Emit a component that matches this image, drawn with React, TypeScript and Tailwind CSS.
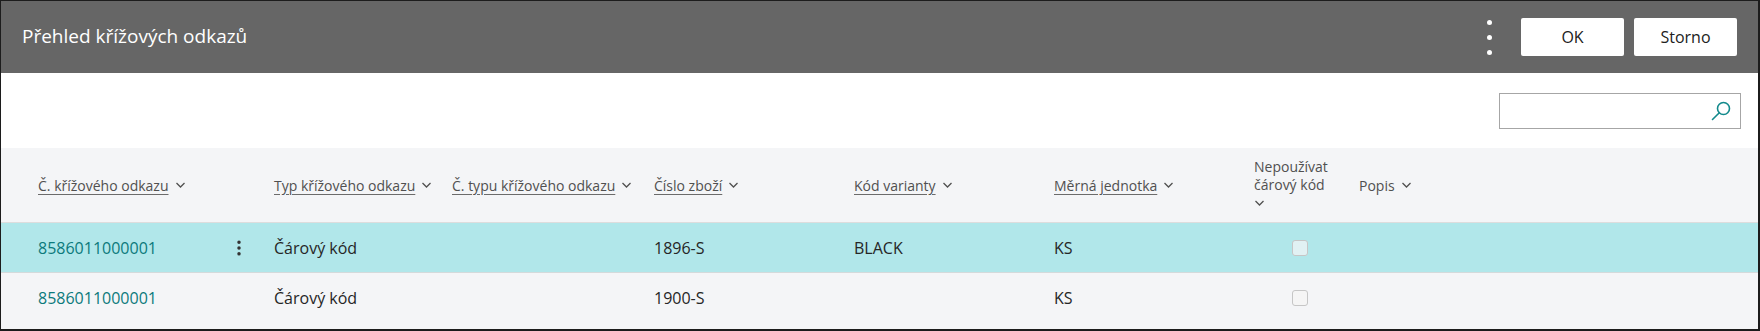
import { MoreVertical } from "lucide-react";

const font = { fontFamily: '"Segoe UI", "Open Sans", sans-serif' };

function Chevron() {
  return (
    <svg width="11" height="8" viewBox="0 0 11 8" className="inline-block ml-[6px] shrink-0">
      <polyline points="1.5,2 5.5,6 9.5,2" fill="none" stroke="#505050" strokeWidth="1.3" />
    </svg>
  );
}

function HeadCell({ label, underline = true }: { label: string; underline?: boolean }) {
  return (
    <div className="flex items-center whitespace-nowrap">
      <span className={underline ? "underline underline-offset-[3px] decoration-[#6b6b6b]" : ""}>{label}</span>
      <Chevron />
    </div>
  );
}

function Checkbox({ tint }: { tint: string }) {
  return <div className={`w-4 h-4 rounded-[3px] border border-[#c6c6c6] ${tint}`} />;
}

const rows = [
  { code: "8586011000001", type: "Čárový kód", item: "1896-S", variant: "BLACK", unit: "KS", active: true },
  { code: "8586011000001", type: "Čárový kód", item: "1900-S", variant: "", unit: "KS", active: false },
];

const cols = "grid grid-cols-[236px_178px_202px_200px_200px_200px_105px_1fr] pl-[37px]";

export default function App() {
  return (
    <div
      style={font}
      className="w-[1760px] h-[331px] flex flex-col border-t border-l border-r-2 border-b-2 border-[#1c1c1c] bg-white overflow-hidden"
    >
      {/* title bar */}
      <div className="h-[72px] shrink-0 bg-[#666666] flex items-center pl-[21px] pr-[21px]">
        <h1 className="text-white text-[19px] leading-none -mt-[1px]">Přehled křížových odkazů</h1>
        <div className="ml-auto flex items-center">
          <div className="flex flex-col items-center gap-[10px] mr-[29px]">
            <span className="w-[5px] h-[5px] rounded-full bg-white" />
            <span className="w-[5px] h-[5px] rounded-full bg-white" />
            <span className="w-[5px] h-[5px] rounded-full bg-white" />
          </div>
          <button className="w-[103px] h-[38px] bg-white text-[#212121] text-[16px] rounded-[2px]">OK</button>
          <button className="w-[103px] h-[38px] bg-white text-[#212121] text-[16px] rounded-[2px] ml-[10px]">
            Storno
          </button>
        </div>
      </div>

      {/* search strip */}
      <div className="h-[75px] shrink-0 flex items-center justify-end pr-[17px]">
        <div className="w-[242px] h-[36px] border border-[#a6a6a6] flex items-center justify-end pr-[8px]">
          <svg width="22" height="22" viewBox="0 0 22 22">
            <circle cx="13.5" cy="8.5" r="6" fill="none" stroke="#138a8c" strokeWidth="1.6" />
            <line x1="9.3" y1="12.7" x2="2.5" y2="19.5" stroke="#138a8c" strokeWidth="1.6" strokeLinecap="round" />
          </svg>
        </div>
      </div>

      {/* table */}
      <div className="flex-1 bg-[#f4f5f7] text-[16px] text-[#262626]">
        <div className={`${cols} h-[75px] items-center border-b border-[#dddddd] text-[14px] text-[#505050]`}>
          <HeadCell label="Č. křížového odkazu" />
          <HeadCell label="Typ křížového odkazu" />
          <HeadCell label="Č. typu křížového odkazu" />
          <HeadCell label="Číslo zboží" />
          <HeadCell label="Kód varianty" />
          <HeadCell label="Měrná jednotka" />
          <div className="flex flex-col leading-[18px]">
            <span>Nepoužívat</span>
            <span>čárový kód</span>
            <span className="h-[18px] flex items-center -ml-[6px]">
              <Chevron />
            </span>
          </div>
          <HeadCell label="Popis" underline={false} />
        </div>

        {rows.map((r, i) => (
          <div
            key={i}
            className={`${cols} h-[50px] items-center ${r.active ? "bg-[#b1e7ea] border-b border-[#d4dadb]" : ""}`}
          >
            <div className="flex items-center">
              <span className="text-[#0c7a7c]">{r.code}</span>
              {r.active && (
                <MoreVertical size={20} strokeWidth={2.2} className="ml-auto mr-[25px] text-[#333]" />
              )}
            </div>
            <div>{r.type}</div>
            <div />
            <div>{r.item}</div>
            <div>{r.variant}</div>
            <div>{r.unit}</div>
            <div className="pl-[38px]">
              <Checkbox tint={r.active ? "bg-[#e1f1f3]" : "bg-[#f5f5f5]"} />
            </div>
            <div />
          </div>
        ))}
      </div>
    </div>
  );
}
